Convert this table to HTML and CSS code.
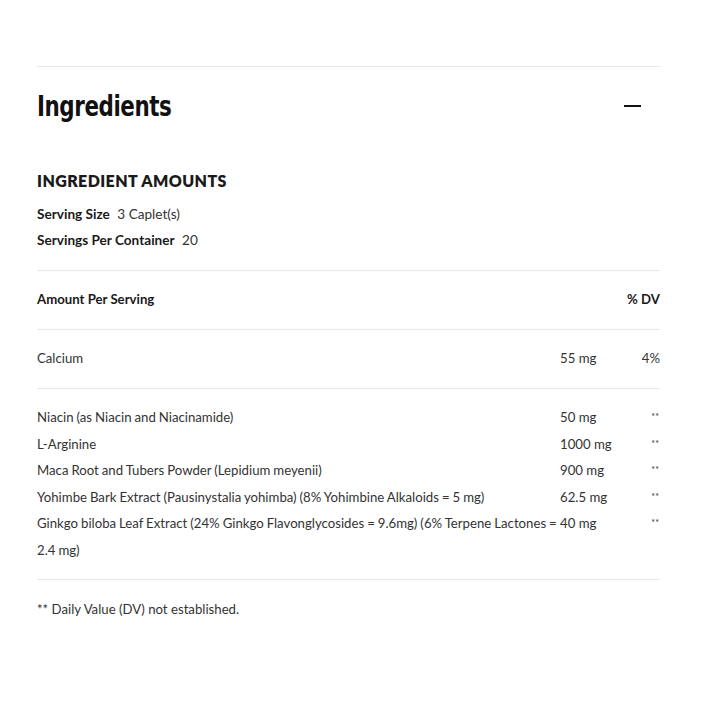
FILE: index.html
```
<!DOCTYPE html>
<html>
<head>
<meta charset="utf-8">
<link rel="stylesheet" href="styles.css">
</head>
<body>
<div class="panel">
  <div class="head">
    <h2 class="title">Ingredients</h2>
    <span class="minus"></span>
  </div>
  <div class="amounts">
    <h3 class="subtitle">INGREDIENT AMOUNTS</h3>
    <div class="meta"><b>Serving Size</b> 3 Caplet(s)</div>
    <div class="meta"><b>Servings Per Container</b> 20</div>
  </div>
  <div class="group">
    <div class="colhead"><span>Amount Per Serving</span><span>% DV</span></div>
  </div>
  <div class="group">
    <div class="row"><span class="name">Calcium</span><span class="amt">55 mg</span><span class="dv">4%</span></div>
  </div>
  <div class="group last">
    <div class="row"><span class="name">Niacin (as Niacin and Niacinamide)</span><span class="amt">50 mg</span><span class="dv star">**</span></div>
    <div class="row"><span class="name">L-Arginine</span><span class="amt">1000 mg</span><span class="dv star">**</span></div>
    <div class="row"><span class="name">Maca Root and Tubers Powder (Lepidium meyenii)</span><span class="amt">900 mg</span><span class="dv star">**</span></div>
    <div class="row"><span class="name">Yohimbe Bark Extract (Pausinystalia yohimba) (8% Yohimbine Alkaloids = 5 mg)</span><span class="amt">62.5 mg</span><span class="dv star">**</span></div>
    <div class="row"><span class="name">Ginkgo biloba Leaf Extract (24% Ginkgo Flavonglycosides = 9.6mg) (6% Terpene Lactones = 2.4 mg)</span><span class="amt">40 mg</span><span class="dv star">**</span></div>
  </div>
  <p class="note">** Daily Value (DV) not established.</p>
</div>
</body>
</html>
```
FILE: styles.css
```
html, body {
  margin: 0;
  padding: 0;
  background: #fff;
}
body {
  font-family: Lato, "Open Sans", sans-serif;
  color: #333;
}
.panel {
  width: 623px;
  margin: 66px 0 0 37px;
  border-top: 1px solid #e8e8e8;
}
.head {
  display: flex;
  align-items: center;
  justify-content: space-between;
  padding-top: 19px;
  height: 40px;
}
.title {
  margin: 0;
  font-family: "DejaVu Sans Condensed", "DejaVu Sans", sans-serif;
  font-weight: bold;
  font-size: 29px;
  line-height: 40px;
  color: #111;
  letter-spacing: -0.5px;
  transform: scaleX(0.82);
  transform-origin: left center;
}
.minus {
  width: 17px;
  height: 2.5px;
  background: #111;
  margin-right: 19px;
}
.amounts {
  padding-top: 45px;
  padding-bottom: 16.5px;
  border-bottom: 1px solid #e8e8e8;
}
.subtitle {
  margin: 0 0 9.75px;
  font-size: 16px;
  line-height: 20px;
  letter-spacing: 0.4px;
  font-weight: 800;
  color: #1a1a1a;
}
.meta {
  font-size: 13.6px;
  line-height: 26.5px;
  color: #333;
}
.meta b {
  color: #1a1a1a;
  margin-right: 4px;
}
.group {
  padding: 14.75px 0 16.75px;
  border-bottom: 1px solid #e8e8e8;
}
.group.last {
  padding-bottom: 16px;
}
.colhead {
  display: flex;
  justify-content: space-between;
  font-size: 13.2px;
  line-height: 26.5px;
  font-weight: bold;
  color: #1a1a1a;
}
.row {
  display: grid;
  grid-template-columns: 523px 70px 30px;
  font-size: 13.2px;
  line-height: 26.5px;
  color: #333;
}
.name {
  word-spacing: -0.4px;
}
.dv {
  text-align: right;
}
.star {
  font-size: 9px;
  padding-right: 1px;
}
.note {
  margin: 0;
  padding-top: 18.5px;
  font-size: 13.2px;
  line-height: 20px;
  color: #333;
}
```
